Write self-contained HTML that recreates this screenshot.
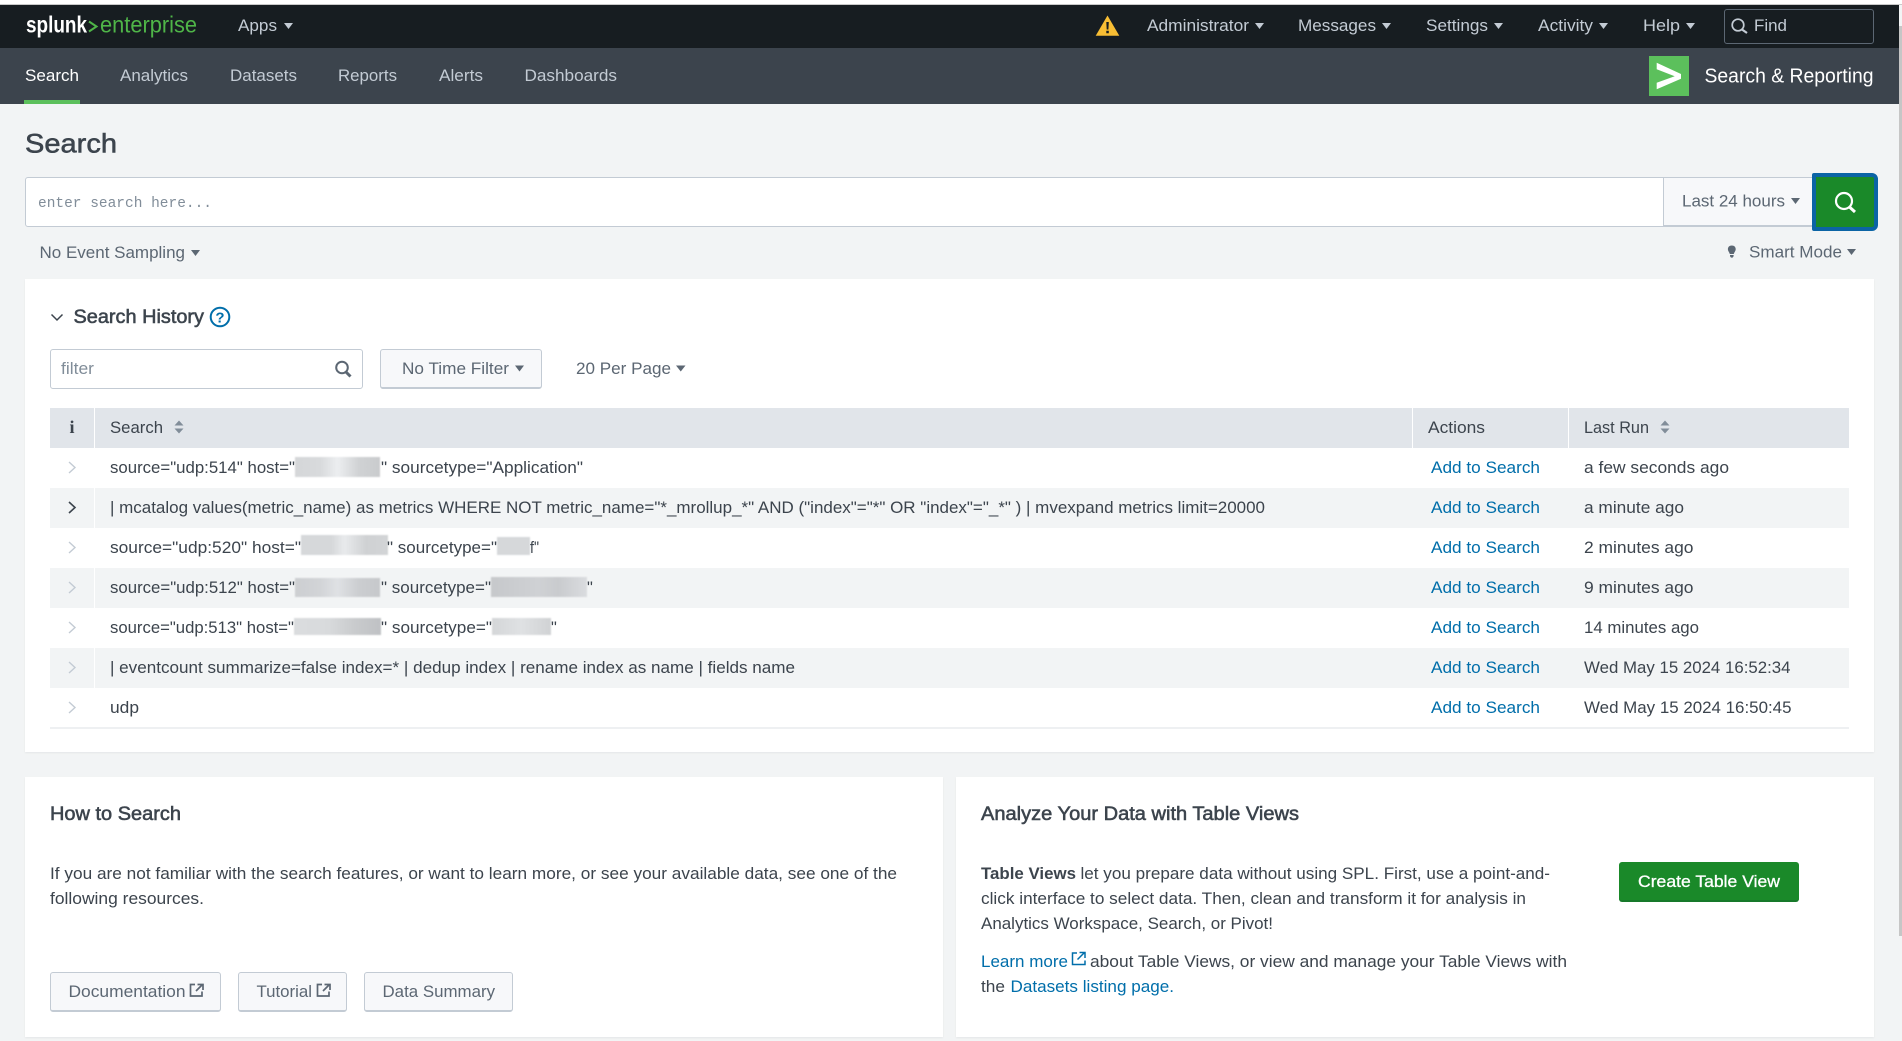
<!DOCTYPE html>
<html lang="en">
<head>
<meta charset="utf-8">
<title>Search | Splunk</title>
<style>
html,body{margin:0;padding:0;width:1902px;height:1041px;overflow:hidden;background:#f2f4f5;}
.b{position:absolute;box-sizing:border-box;}
svg{position:absolute;left:0;top:0;}
text{font-family:"Liberation Sans",sans-serif;font-size:16.5px;fill:#3c444d;white-space:pre;}
.n{font-size:16.8px;fill:#c3cbd4;}
.m{font-size:16.8px;fill:#c3cbd4;}
.l{fill:#006eaa;}
.g{fill:#5c6773;}
.h{stroke:#3c444d;stroke-width:.55px;}
.blur{position:absolute;filter:blur(.8px);}
</style>
</head>
<body>
<div class="b" style="left:0;top:0;width:1902px;height:5px;background:#fff;border-bottom:1px solid #c9c9c9"></div>
<div class="b" style="left:0;top:5px;width:1899px;height:43px;background:#171d21"></div>
<div class="b" style="left:0;top:48px;width:1899px;height:56px;background:#3c444d"></div>
<div class="b" style="left:24px;top:100px;width:56px;height:4px;background:#5cc05c"></div>
<div class="b" style="left:1899px;top:26px;width:3px;height:910px;background:#c6c6c6"></div>
<div class="b" style="left:1724px;top:9px;width:150px;height:35px;border:1px solid #5c6773;border-radius:3px"></div>
<div class="b" style="left:1649px;top:56px;width:40px;height:40px;background:#5cc05c"></div>

<!-- search bar -->
<div class="b" style="left:25px;top:177px;width:1640px;height:50px;background:#fff;border:1px solid #c3cbd4;border-radius:3px 0 0 3px"></div>
<div class="b" style="left:1663px;top:177px;width:152px;height:50px;background:#f7f8fa;border:1px solid #c3cbd4;border-bottom-width:2px"></div>
<div class="b" style="left:1812px;top:173px;width:66px;height:58px;background:#1a8929;border:4px solid #0b64a5;border-radius:2px 6px 6px 2px"></div>

<!-- panels -->
<div class="b" style="left:25px;top:279px;width:1849px;height:473px;background:#fff;box-shadow:0 1px 2px rgba(0,0,0,.06)"></div>
<div class="b" style="left:25px;top:777px;width:918px;height:260px;background:#fff;box-shadow:0 1px 2px rgba(0,0,0,.06)"></div>
<div class="b" style="left:956px;top:777px;width:918px;height:260px;background:#fff;box-shadow:0 1px 2px rgba(0,0,0,.06)"></div>

<!-- controls -->
<div class="b" style="left:50px;top:349px;width:313px;height:40px;background:#fff;border:1px solid #c3cbd4;border-radius:3px"></div>
<div class="b" style="left:380px;top:349px;width:162px;height:40px;background:#f7f8fa;border:1px solid #c3cbd4;border-bottom-width:2px;border-radius:3px"></div>

<!-- table -->
<div class="b" style="left:50px;top:408px;width:1799px;height:40px;background:#e1e5ea"></div>
<div class="b" style="left:50px;top:488px;width:1799px;height:40px;background:#f2f4f5"></div>
<div class="b" style="left:50px;top:568px;width:1799px;height:40px;background:#f2f4f5"></div>
<div class="b" style="left:50px;top:648px;width:1799px;height:40px;background:#f2f4f5"></div>
<div class="b" style="left:50px;top:727px;width:1799px;height:2px;background:#eef0f2"></div>
<div class="b" style="left:94px;top:408px;width:1px;height:40px;background:#fff"></div>
<div class="b" style="left:94px;top:488px;width:1px;height:40px;background:#fff"></div>
<div class="b" style="left:94px;top:568px;width:1px;height:40px;background:#fff"></div>
<div class="b" style="left:94px;top:648px;width:1px;height:40px;background:#fff"></div>
<div class="b" style="left:1412px;top:408px;width:1px;height:40px;background:#fff"></div>
<div class="b" style="left:1568px;top:408px;width:1px;height:40px;background:#fff"></div>

<!-- redacted blur blocks -->
<div class="blur" style="left:295px;top:457px;width:85px;height:20px;background:linear-gradient(90deg,#d4d6d8,#d8dadc 30%,#eceef0 50%,#d0d2d4 75%,#c9cbcd)"></div>
<div class="blur" style="left:301px;top:535px;width:87px;height:20px;background:linear-gradient(90deg,#d6d8da,#d6d8da 35%,#e8eaec 50%,#cfd1d3 75%,#d2d4d6)"></div>
<div class="blur" style="left:497px;top:537px;width:33px;height:18px;background:#d6d8da"></div>
<div class="blur" style="left:295px;top:578px;width:85px;height:19px;background:linear-gradient(90deg,#ccced1,#d2d4d7 30%,#dfe1e4 50%,#cbcdd0 75%,#c6c8cb)"></div>
<div class="blur" style="left:491px;top:577px;width:96px;height:20px;background:linear-gradient(90deg,#c6c8cb,#cfd1d4 50%,#c9cbce 70%,#dadcdf)"></div>
<div class="blur" style="left:294px;top:618px;width:87px;height:17px;background:linear-gradient(90deg,#dadcde,#d8dadc 40%,#c9cbcd 70%,#bfc1c4)"></div>
<div class="blur" style="left:492px;top:618px;width:59px;height:17px;background:linear-gradient(90deg,#d4d6d8,#dfe1e3 50%,#d0d2d4)"></div>

<!-- buttons -->
<div class="b" style="left:50px;top:972px;width:171px;height:40px;background:#f7f8fa;border:1px solid #c3cbd4;border-bottom-width:2px;border-radius:3px"></div>
<div class="b" style="left:238px;top:972px;width:109px;height:40px;background:#f7f8fa;border:1px solid #c3cbd4;border-bottom-width:2px;border-radius:3px"></div>
<div class="b" style="left:364px;top:972px;width:149px;height:40px;background:#f7f8fa;border:1px solid #c3cbd4;border-bottom-width:2px;border-radius:3px"></div>
<div class="b" style="left:1619px;top:862px;width:180px;height:40px;background:#1a8929;border-bottom:2px solid #17792a;border-radius:3px"></div>

<svg width="1902" height="1041" viewBox="0 0 1902 1041" xmlns="http://www.w3.org/2000/svg">
<!-- logo -->
<text x="26" y="32.500" style="font-size:23px;font-weight:bold;fill:#fff" textLength="61" lengthAdjust="spacingAndGlyphs">splunk</text>
<path d="M89 21.500l7.500 5-7.500 5" fill="none" stroke="#4fb548" stroke-width="2"/>
<text x="100" y="32.500" style="font-size:23px;fill:#4fb548" textLength="97" lengthAdjust="spacingAndGlyphs">enterprise</text>

<!-- top nav -->
<text class="n" x="238" y="31" textLength="39" lengthAdjust="spacingAndGlyphs">Apps</text>
<path d="M284 23h9l-4.500 6z" fill="#c3cbd4"/>
<path d="M1107.500 15.500l11.800 20.300h-23.600z" fill="#f8be34"/>
<path d="M1106.300 22h2.500l-.4 7.500h-1.700zM1106.300 30.800h2.500v2.500h-2.500z" fill="#171d21"/>
<text class="n" x="1147" y="31" textLength="102" lengthAdjust="spacingAndGlyphs">Administrator</text>
<path d="M1255 23h9l-4.500 6z" fill="#c3cbd4"/>
<text class="n" x="1298" y="31" textLength="78" lengthAdjust="spacingAndGlyphs">Messages</text>
<path d="M1382 23h9l-4.500 6z" fill="#c3cbd4"/>
<text class="n" x="1426" y="31" textLength="62" lengthAdjust="spacingAndGlyphs">Settings</text>
<path d="M1494 23h9l-4.500 6z" fill="#c3cbd4"/>
<text class="n" x="1538" y="31" textLength="55" lengthAdjust="spacingAndGlyphs">Activity</text>
<path d="M1599 23h9l-4.500 6z" fill="#c3cbd4"/>
<text class="n" x="1643" y="31" textLength="37" lengthAdjust="spacingAndGlyphs">Help</text>
<path d="M1686 23h9l-4.500 6z" fill="#c3cbd4"/>
<circle cx="1738" cy="25" r="5.800" fill="none" stroke="#c3cbd4" stroke-width="1.700"/>
<path d="M1742 29.500l5 3.500" stroke="#c3cbd4" stroke-width="2.200" fill="none"/>
<text class="n" x="1754" y="31" textLength="33" lengthAdjust="spacingAndGlyphs">Find</text>

<!-- second nav -->
<text class="m" x="25" y="81" style="fill:#fff" textLength="54" lengthAdjust="spacingAndGlyphs">Search</text>
<text class="m" x="120" y="81" textLength="68" lengthAdjust="spacingAndGlyphs">Analytics</text>
<text class="m" x="230" y="81" textLength="67" lengthAdjust="spacingAndGlyphs">Datasets</text>
<text class="m" x="338" y="81" textLength="59" lengthAdjust="spacingAndGlyphs">Reports</text>
<text class="m" x="439" y="81" textLength="44" lengthAdjust="spacingAndGlyphs">Alerts</text>
<text class="m" x="524.500" y="81" textLength="92.500" lengthAdjust="spacingAndGlyphs">Dashboards</text>
<path d="M1656.700 62.700L1681 74v4.700L1656.700 89.300v-6.600L1674.700 76.300 1656.700 69.300z" fill="#fff"/>
<text x="1704.500" y="82.500" style="font-size:20px;fill:#fff" textLength="169" lengthAdjust="spacingAndGlyphs">Search &amp; Reporting</text>

<!-- page title and search -->
<text class="h" x="25" y="152.500" style="font-size:27px" textLength="92" lengthAdjust="spacingAndGlyphs">Search</text>
<text x="38" y="207" style="font-family:'Liberation Mono',monospace;font-size:15px;fill:#818d99" textLength="174" lengthAdjust="spacingAndGlyphs">enter search here...</text>
<text class="g" x="1682" y="206.700" textLength="103" lengthAdjust="spacingAndGlyphs">Last 24 hours</text>
<path d="M1791 198h9l-4.500 6z" fill="#5c6773"/>
<circle cx="1844" cy="201" r="8" fill="none" stroke="#fff" stroke-width="2.200"/>
<path d="M1849.500 207l5.500 5" stroke="#fff" stroke-width="3" fill="none"/>
<text class="g" x="39.500" y="258" textLength="145.500" lengthAdjust="spacingAndGlyphs">No Event Sampling</text>
<path d="M191 250h9l-4.500 6z" fill="#5c6773"/>
<path d="M1731.800 245.500c2.500 0 3.900 1.600 3.900 3.600 0 2-1.400 3-1.900 4.900h-4c-.5-1.900-1.900-2.900-1.900-4.900 0-2 1.400-3.600 3.900-3.600zM1730 255h3.600v1.300l-1 1.300h-1.600l-1-1.300z" fill="#5c6773"/>
<text class="g" x="1749" y="257.700" textLength="93" lengthAdjust="spacingAndGlyphs">Smart Mode</text>
<path d="M1847 249h9l-4.500 6z" fill="#5c6773"/>

<!-- search history header -->
<path d="M51.500 314.500l5.500 5.500 5.500-5.500" fill="none" stroke="#3c444d" stroke-width="1.500"/>
<text class="h" x="73.500" y="323" style="font-size:19.500px" textLength="130.500" lengthAdjust="spacingAndGlyphs">Search History</text>
<circle cx="220" cy="317" r="9.300" fill="none" stroke="#006eaa" stroke-width="2"/>
<text x="220" y="322.500" text-anchor="middle" style="font-size:15px;font-weight:bold;fill:#006eaa">?</text>

<text x="61" y="374" style="fill:#818d99" textLength="33" lengthAdjust="spacingAndGlyphs">filter</text>
<circle cx="342" cy="367.500" r="5.800" fill="none" stroke="#5c6773" stroke-width="2"/>
<path d="M346 372l4.500 4.500" stroke="#5c6773" stroke-width="3" fill="none"/>
<text class="g" x="402" y="374" textLength="107" lengthAdjust="spacingAndGlyphs">No Time Filter</text>
<path d="M515 365.500h9l-4.500 6z" fill="#5c6773"/>
<text class="g" x="576" y="374" textLength="95" lengthAdjust="spacingAndGlyphs">20 Per Page</text>
<path d="M676 365.500h9.500l-4.750 6z" fill="#5c6773"/>

<!-- table head -->
<text x="72" y="433" text-anchor="middle" style="font-family:'Liberation Serif',serif;font-size:18px;font-weight:bold;fill:#3c444d">i</text>
<text x="110" y="433" textLength="53" lengthAdjust="spacingAndGlyphs">Search</text>
<path d="M174.500 425.500l4.500-5 4.500 5zM174.500 428.500l4.500 5 4.500-5z" fill="#818d99"/>
<text x="1428" y="433" textLength="57" lengthAdjust="spacingAndGlyphs">Actions</text>
<text x="1584" y="433" textLength="65" lengthAdjust="spacingAndGlyphs">Last Run</text>
<path d="M1660.500 425.500l4.500-5 4.500 5zM1660.500 428.500l4.500 5 4.500-5z" fill="#818d99"/>

<!-- chevrons -->
<g fill="none" stroke="#c3cbd4" stroke-width="1.400">
<path d="M69 462l6 5.500-6 5.500"/>
<path d="M69 542l6 5.500-6 5.500"/>
<path d="M69 582l6 5.500-6 5.500"/>
<path d="M69 622l6 5.500-6 5.500"/>
<path d="M69 662l6 5.500-6 5.500"/>
<path d="M69 702l6 5.500-6 5.500"/>
</g>
<path d="M69 502l6 5.500-6 5.500" fill="none" stroke="#3c444d" stroke-width="1.600"/>

<!-- rows -->
<text x="110" y="473" textLength="185" lengthAdjust="spacingAndGlyphs">source="udp:514" host="</text>
<text x="381" y="473" textLength="202" lengthAdjust="spacingAndGlyphs">" sourcetype="Application"</text>
<text x="110" y="513" textLength="1155" lengthAdjust="spacingAndGlyphs">| mcatalog values(metric_name) as metrics WHERE NOT metric_name="*_mrollup_*" AND ("index"="*" OR "index"="_*" ) | mvexpand metrics limit=20000</text>
<text x="110" y="553" textLength="191" lengthAdjust="spacingAndGlyphs">source="udp:520" host="</text>
<text x="387" y="553" textLength="110" lengthAdjust="spacingAndGlyphs">" sourcetype="</text>
<text x="530" y="553" textLength="9" lengthAdjust="spacingAndGlyphs">f"</text>
<text x="110" y="593" textLength="185" lengthAdjust="spacingAndGlyphs">source="udp:512" host="</text>
<text x="381" y="593" textLength="110" lengthAdjust="spacingAndGlyphs">" sourcetype="</text>
<text x="587" y="593">"</text>
<text x="110" y="633" textLength="184" lengthAdjust="spacingAndGlyphs">source="udp:513" host="</text>
<text x="381" y="633" textLength="111" lengthAdjust="spacingAndGlyphs">" sourcetype="</text>
<text x="551" y="633">"</text>
<text x="110" y="673" textLength="685" lengthAdjust="spacingAndGlyphs">| eventcount summarize=false index=* | dedup index | rename index as name | fields name</text>
<text x="110" y="713" textLength="29" lengthAdjust="spacingAndGlyphs">udp</text>

<g class="links">
<text class="l" x="1431" y="473" textLength="109" lengthAdjust="spacingAndGlyphs">Add to Search</text>
<text class="l" x="1431" y="513" textLength="109" lengthAdjust="spacingAndGlyphs">Add to Search</text>
<text class="l" x="1431" y="553" textLength="109" lengthAdjust="spacingAndGlyphs">Add to Search</text>
<text class="l" x="1431" y="593" textLength="109" lengthAdjust="spacingAndGlyphs">Add to Search</text>
<text class="l" x="1431" y="633" textLength="109" lengthAdjust="spacingAndGlyphs">Add to Search</text>
<text class="l" x="1431" y="673" textLength="109" lengthAdjust="spacingAndGlyphs">Add to Search</text>
<text class="l" x="1431" y="713" textLength="109" lengthAdjust="spacingAndGlyphs">Add to Search</text>
</g>
<text x="1584" y="473" textLength="145" lengthAdjust="spacingAndGlyphs">a few seconds ago</text>
<text x="1584" y="513" textLength="100" lengthAdjust="spacingAndGlyphs">a minute ago</text>
<text x="1584" y="553" textLength="109.500" lengthAdjust="spacingAndGlyphs">2 minutes ago</text>
<text x="1584" y="593" textLength="109.500" lengthAdjust="spacingAndGlyphs">9 minutes ago</text>
<text x="1584" y="633" textLength="115" lengthAdjust="spacingAndGlyphs">14 minutes ago</text>
<text x="1584" y="673" textLength="206.500" lengthAdjust="spacingAndGlyphs">Wed May 15 2024 16:52:34</text>
<text x="1584" y="713" textLength="207.500" lengthAdjust="spacingAndGlyphs">Wed May 15 2024 16:50:45</text>

<!-- how to search -->
<text class="h" x="50" y="820" style="font-size:19px" textLength="131" lengthAdjust="spacingAndGlyphs">How to Search</text>
<text x="50" y="879" textLength="847" lengthAdjust="spacingAndGlyphs">If you are not familiar with the search features, or want to learn more, or see your available data, see one of the</text>
<text x="50" y="904" textLength="154" lengthAdjust="spacingAndGlyphs">following resources.</text>
<text class="g" x="68.500" y="997" textLength="117" lengthAdjust="spacingAndGlyphs">Documentation</text>
<path d="M195 984.500h-4.500v11.500h11.500v-4.500" fill="none" stroke="#5c6773" stroke-width="1.700"/>
<path d="M196 991l6-6M197.500 984.500h5.500v5.500" fill="none" stroke="#5c6773" stroke-width="1.700"/>
<text class="g" x="256.500" y="997" textLength="55.500" lengthAdjust="spacingAndGlyphs">Tutorial</text>
<path d="M322 984.500h-4.500v11.500h11.500v-4.500" fill="none" stroke="#5c6773" stroke-width="1.700"/>
<path d="M323 991l6-6M324.500 984.500h5.500v5.500" fill="none" stroke="#5c6773" stroke-width="1.700"/>
<text class="g" x="382.500" y="997" textLength="112.500" lengthAdjust="spacingAndGlyphs">Data Summary</text>

<!-- table views -->
<text class="h" x="981" y="820" style="font-size:19px" textLength="318" lengthAdjust="spacingAndGlyphs">Analyze Your Data with Table Views</text>
<text x="981" y="879" style="font-weight:bold" textLength="95" lengthAdjust="spacingAndGlyphs">Table Views</text>
<text x="1080.500" y="879" textLength="469.500" lengthAdjust="spacingAndGlyphs">let you prepare data without using SPL. First, use a point-and-</text>
<text x="981" y="904" textLength="545" lengthAdjust="spacingAndGlyphs">click interface to select data. Then, clean and transform it for analysis in</text>
<text x="981" y="929" textLength="292" lengthAdjust="spacingAndGlyphs">Analytics Workspace, Search, or Pivot!</text>
<text class="l" x="981" y="967" textLength="87" lengthAdjust="spacingAndGlyphs">Learn more</text>
<path d="M1077 953h-4.500v11.500h12.500v-4" fill="none" stroke="#006eaa" stroke-width="1.500"/>
<path d="M1077.500 959.500l7-7M1079.500 952.500h5.500v5.500" fill="none" stroke="#006eaa" stroke-width="1.500"/>
<text x="1090" y="967" textLength="477" lengthAdjust="spacingAndGlyphs">about Table Views, or view and manage your Table Views with</text>
<text x="981" y="992" textLength="24" lengthAdjust="spacingAndGlyphs">the</text>
<text class="l" x="1010.500" y="992" textLength="163.500" lengthAdjust="spacingAndGlyphs">Datasets listing page.</text>
<text x="1638" y="887" style="fill:#fff;stroke:#fff;stroke-width:.3px" textLength="142" lengthAdjust="spacingAndGlyphs">Create Table View</text>
</svg>
</body>
</html>
